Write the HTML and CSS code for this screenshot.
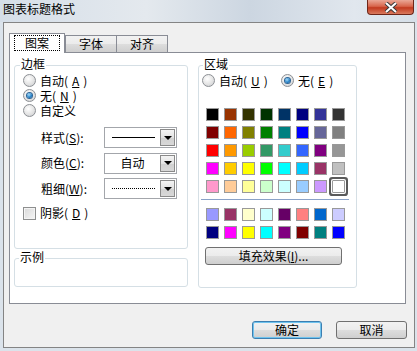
FILE: index.html
```html
<!DOCTYPE html>
<html lang="zh-CN">

<head>
    <meta charset="UTF-8">
    <title>图表标题格式</title>
    <link rel="stylesheet" href="styles.css">
</head>

<body>
    <div class="titlebar">
        <div class="title">图表标题格式</div>
        <div class="close">
            <svg width="14" height="11" viewBox="0 0 14 11">
                <path d="M2 1 L12 10 M12 1 L2 10" stroke="#3a3a3a" stroke-width="4" />
                <path d="M2 1 L12 10 M12 1 L2 10" stroke="#fff" stroke-width="2" />
            </svg>
        </div>
    </div>

    <div class="dialog">
        <div class="tabs">
            <div class="tab active"><span class="focus">图案</span></div>
            <div class="tab">字体</div>
            <div class="tab">对齐</div>
        </div>

        <div class="panel">
            <!-- left column: border + sample -->
            <div class="col-left">
                <div class="group border-group">
                    <div class="group-title">边框</div>
                    <div class="radios">
                        <div class="radio-row"><span class="radio"></span>自动(<u>A</u>)</div>
                        <div class="radio-row"><span class="radio checked"></span>无(<u>N</u>)</div>
                        <div class="radio-row"><span class="radio"></span>自定义</div>
                    </div>
                    <div class="combos">
                        <div class="combo-row">
                            <span class="combo-label">样式(<u>S</u>):</span>
                            <div class="combo"><span class="value"><span class="line-solid"></span></span><span class="drop"></span></div>
                        </div>
                        <div class="combo-row">
                            <span class="combo-label">颜色(<u>C</u>):</span>
                            <div class="combo"><span class="value">自动</span><span class="drop"></span></div>
                        </div>
                        <div class="combo-row">
                            <span class="combo-label">粗细(<u>W</u>):</span>
                            <div class="combo"><span class="value"><span class="line-dotted"></span></span><span class="drop"></span></div>
                        </div>
                    </div>
                    <div class="check-row"><span class="checkbox"></span>阴影(<u>D</u>)</div>
                </div>

                <div class="group sample-group">
                    <div class="group-title">示例</div>
                </div>
            </div>

            <!-- right column: area colours -->
            <div class="group area-group">
                <div class="group-title">区域</div>
                <div class="area-radios">
                    <div class="radio-row opt-auto"><span class="radio"></span>自动(<u>U</u>)</div>
                    <div class="radio-row"><span class="radio checked"></span>无(<u>E</u>)</div>
                </div>
                <div class="swatches" id="mainColors"></div>
                <div class="separator"></div>
                <div class="swatches extra" id="extraColors"></div>
                <button class="btn fill-btn" type="button">填充效果(<u>I</u>)...</button>
            </div>
        </div>

        <div class="actions">
            <button class="btn ok" type="button">确定</button>
            <button class="btn" type="button">取消</button>
        </div>
    </div>

    <script>
        // Excel palette, 8 per row
        var mainColors = [
            "#000000", "#993300", "#333300", "#003300", "#003366", "#000080", "#333399", "#333333",
            "#800000", "#FF6600", "#808000", "#008000", "#008080", "#0000FF", "#666699", "#808080",
            "#FF0000", "#FF9900", "#99CC00", "#339966", "#33CCCC", "#3366FF", "#800080", "#969696",
            "#FF00FF", "#FFCC00", "#FFFF00", "#00FF00", "#00FFFF", "#00CCFF", "#993366", "#C0C0C0",
            "#FF99CC", "#FFCC99", "#FFFF99", "#CCFFCC", "#CCFFFF", "#99CCFF", "#CC99FF", "#FFFFFF"
        ];
        var extraColors = [
            "#9999FF", "#993366", "#FFFFCC", "#CCFFFF", "#660066", "#FF8080", "#0066CC", "#CCCCFF",
            "#000080", "#FF00FF", "#FFFF00", "#00FFFF", "#800080", "#800000", "#008080", "#0000FF"
        ];

        function fillSwatches(id, colors, selected) {
            var box = document.getElementById(id);
            colors.forEach(function (c, i) {
                var s = document.createElement("span");
                s.className = "swatch" + (i === selected ? " selected" : "");
                s.style.background = c;
                box.appendChild(s);
            });
        }

        fillSwatches("mainColors", mainColors, 39);
        fillSwatches("extraColors", extraColors, -1);
    </script>
</body>

</html>
```

FILE: styles.css
```css
body {
    margin: 0;
    width: 417px;
    height: 351px;
    overflow: hidden;
    background: #dbe3eb;
    font-family: "Noto Sans CJK SC", "Noto Sans", sans-serif;
    font-size: 12px;
    line-height: 14px;
    color: #000;
}

u {
    text-decoration: underline;
}

/* window title */
.titlebar {
    height: 22px;
    display: flex;
    justify-content: space-between;
    align-items: flex-start;
    background: linear-gradient(to right, #d5dee8, #e4e9ee 35%, #ccd6e1 60%, #e1e7ee 85%, #d6dfe8);
}

.title {
    padding: 2px 0 0 3px;
}

.close {
    width: 45px;
    height: 14px;
    margin-right: 3px;
    border: 1px solid #6e2619;
    border-top: none;
    border-radius: 0 0 4px 4px;
    background: linear-gradient(#eaa796, #d8664c 45%, #c23a1f 55%, #d97a5e);
    display: flex;
    align-items: center;
    justify-content: center;
}

/* dialog body */
.dialog {
    box-sizing: border-box;
    width: 412px;
    height: 326px;
    margin-left: 3px;
    border: 1px solid #848484;
    background: #f0f0f0;
    padding: 10px 0 0 5px;
}

.tabs {
    display: flex;
    align-items: flex-end;
    height: 19px;
}

.tab {
    box-sizing: border-box;
    height: 17px;
    width: 52px;
    margin-left: -1px;
    border: 1px solid #898c95;
    border-bottom: none;
    background: linear-gradient(#f2f2f2, #ebebeb 50%, #dddddd 51%, #cfcfcf);
    text-align: center;
    padding-top: 1px;
}

.tab.active {
    position: relative;
    z-index: 1;
    width: 56px;
    height: 20px;
    margin-left: 0;
    margin-bottom: -1px;
    margin-right: 1px;
    background: #fff;
    padding-top: 2px;
}

.focus {
    display: inline-block;
    width: 44px;
    height: 14px;
    outline: 1px dotted #000;
    outline-offset: 0;
}

.panel {
    box-sizing: border-box;
    width: 397px;
    height: 252px;
    border: 1px solid #898c95;
    background: #fff;
    display: flex;
    gap: 10px;
    padding: 12px 0 0 4px;
}

.col-left {
    width: 174px;
    display: flex;
    flex-direction: column;
}

.group {
    box-sizing: border-box;
    border: 1px solid #d5dfe5;
    border-radius: 3px;
}

.group-title {
    display: table;
    margin: -9px 0 0 5px;
    padding: 0 1px;
    background: #fff;
}

.border-group {
    height: 184px;
}

.sample-group {
    height: 29px;
    margin-top: 9px;
}

.sample-group .group-title {
    margin-left: 4px;
}

/* radios and checkbox */
.radios {
    margin-top: 2px;
    padding-left: 8px;
}

.radio-row {
    height: 15px;
    display: flex;
    align-items: center;
    gap: 4px;
}

.radio {
    box-sizing: border-box;
    width: 13px;
    height: 13px;
    border-radius: 50%;
    border: 1px solid #8c8f94;
    background: radial-gradient(circle at 40% 35%, #ffffff, #e6e6e6 50%, #c9cbce);
    display: flex;
    align-items: center;
    justify-content: center;
}

.radio.checked::after {
    content: "";
    width: 5px;
    height: 5px;
    border-radius: 50%;
    background: radial-gradient(circle at 40% 35%, #a6dcfa, #1e7cc4 60%, #0c4a86);
    box-shadow: 0 0 0 1px #2d6394;
}

.combos {
    margin-top: 9px;
    padding-left: 26px;
    display: flex;
    flex-direction: column;
    gap: 4.5px;
}

.combo-row {
    display: flex;
    align-items: center;
    height: 21px;
}

.combo-label {
    width: 63px;
}

.combo {
    box-sizing: border-box;
    width: 73px;
    height: 21px;
    border: 1px solid #a3a6ab;
    background: #fff;
    display: flex;
}

.combo .value {
    flex: 1;
    display: flex;
    align-items: center;
    justify-content: center;
}

.line-solid {
    width: 43px;
    border-top: 1px solid #000;
    margin-left: 1px;
}

.line-dotted {
    width: 43px;
    border-top: 1px dotted #000;
    margin-left: 1px;
}

.drop {
    box-sizing: border-box;
    width: 15px;
    margin: 1px 1px 1px 0;
    border: 1px solid #8a8a8a;
    background: linear-gradient(#f4f4f4, #e2e2e2 50%, #d0d0d0 51%, #d8d8d8);
    display: flex;
    align-items: center;
    justify-content: center;
}

.drop::after {
    content: "";
    border-left: 4px solid transparent;
    border-right: 4px solid transparent;
    border-top: 4px solid #000;
}

.check-row {
    margin-top: 7px;
    padding-left: 8px;
    height: 14px;
    display: flex;
    align-items: center;
    gap: 4px;
}

.checkbox {
    box-sizing: border-box;
    width: 13px;
    height: 13px;
    border: 1px solid #8e8f8f;
    background: linear-gradient(135deg, #d9d9d9, #f6f6f6);
    box-shadow: inset 0 0 0 1px #f4f4f4;
}

/* area group */
.area-group {
    width: 159px;
    height: 223px;
}

.area-group .group-title {
    margin-left: 4px;
}

.area-radios {
    display: flex;
    margin-top: 2px;
    padding-left: 3px;
}

.opt-auto {
    width: 79px;
}

.swatches {
    display: grid;
    grid-template-columns: repeat(8, 13px);
    grid-auto-rows: 13px;
    gap: 5px;
    margin: 20px 0 0 7px;
}

.swatches.extra {
    margin-top: 8px;
}

.swatch {
    box-sizing: border-box;
    border: 1px solid #999;
}

.swatch.selected {
    border-radius: 1px;
    box-shadow: 0 0 0 1px #fff, 0 0 0 3px #5a5a5a;
}

.separator {
    width: 148px;
    margin: 6px 0 0 2px;
    border-top: 1px solid #8aa2c8;
}

/* buttons */
.btn {
    box-sizing: border-box;
    height: 18px;
    padding: 0;
    border: 1px solid #707070;
    border-radius: 3px;
    background: linear-gradient(#f2f2f2, #ebebeb 50%, #dddddd 51%, #cfcfcf);
    font-family: inherit;
    font-size: 12px;
    line-height: 14px;
    color: #000;
}

.fill-btn {
    width: 137px;
    margin: 8px 0 0 6px;
    display: block;
}

.actions {
    display: flex;
    justify-content: flex-end;
    gap: 14px;
    margin: 17px 7px 0 0;
}

.actions .btn {
    width: 71px;
}

.btn.ok {
    width: 70px;
    border-color: #3c7fb1;
    box-shadow: 0 0 0 1px #6fc3ee inset;
}
```
